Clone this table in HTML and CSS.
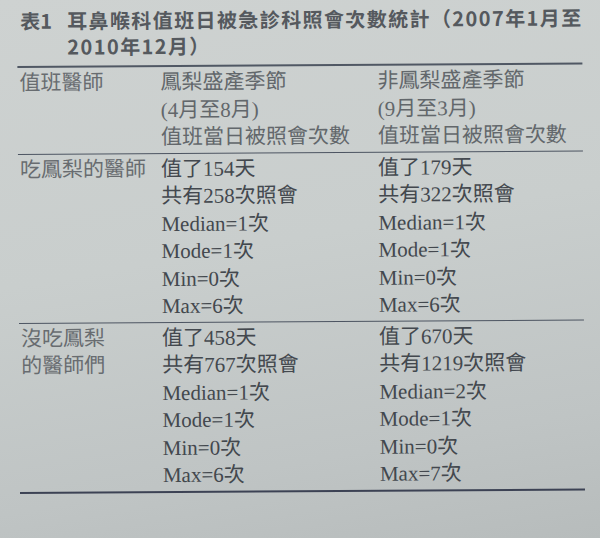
FILE: index.html
```html
<!DOCTYPE html>
<html lang="zh-Hant">
<head>
<meta charset="utf-8">
<title>表1</title>
<link rel="stylesheet" href="styles.css">
</head>
<body>
<div class="page">
  <div class="caption">
    <span class="cap-label">表1</span>
    <span class="cap-text">耳鼻喉科值班日被急診科照會次數統計（2007年1月至<br>2010年12月）</span>
  </div>
  <div class="table">
    <div class="group head">
      <div class="c1"><div>值班醫師</div></div>
      <div class="c2"><div>鳳梨盛產季節</div><div>(4月至8月)</div><div>值班當日被照會次數</div></div>
      <div class="c3"><div>非鳳梨盛產季節</div><div>(9月至3月)</div><div>值班當日被照會次數</div></div>
    </div>
    <div class="group">
      <div class="c1"><div>吃鳳梨的醫師</div></div>
      <div class="c2"><div>值了154天</div><div>共有258次照會</div><div>Median=1次</div><div>Mode=1次</div><div>Min=0次</div><div>Max=6次</div></div>
      <div class="c3"><div>值了179天</div><div>共有322次照會</div><div>Median=1次</div><div>Mode=1次</div><div>Min=0次</div><div>Max=6次</div></div>
    </div>
    <div class="group last">
      <div class="c1"><div>沒吃鳳梨</div><div>的醫師們</div></div>
      <div class="c2"><div>值了458天</div><div>共有767次照會</div><div>Median=1次</div><div>Mode=1次</div><div>Min=0次</div><div>Max=6次</div></div>
      <div class="c3"><div>值了670天</div><div>共有1219次照會</div><div>Median=2次</div><div>Mode=1次</div><div>Min=0次</div><div>Max=7次</div></div>
    </div>
  </div>
</div>
</body>
</html>
```
FILE: styles.css
```css
html, body {
  margin: 0;
  padding: 0;
}
body {
  width: 600px;
  height: 538px;
  overflow: hidden;
  background: linear-gradient(170deg, #ced2d1 0%, #c9cecd 45%, #bfc4c4 80%, #b7bcbc 100%);
}
.page {
  padding: 8px 14px 0 17px;
  transform: rotate(-0.35deg);
  transform-origin: 0 0;
}
.caption {
  display: flex;
  font-family: "Noto Sans CJK TC", "Liberation Sans", sans-serif;
  font-weight: 700;
  font-size: 20px;
  line-height: 26px;
  color: #55595e;
  padding-left: 3px;
}
.cap-label {
  width: 47px;
  flex: none;
}
.cap-text {
  letter-spacing: 1.4px;
}
.table {
  margin-top: 6px;
  width: 565px;
  border-top: 2px solid #505864;
  font-family: "Liberation Serif", "Noto Sans CJK TC", serif;
  font-size: 21px;
  line-height: 27.5px;
  color: #43484e;
}
.group {
  display: grid;
  grid-template-columns: 143px 217px 1fr;
  padding: 2px 0 1px;
  border-bottom: 1.5px solid #4d5562;
}
.group.last {
  border-bottom: 2px solid #3c4254;
}
.c1 {
  padding-left: 2px;
  color: #686c70;
}
.head .c2,
.head .c3 {
  color: #62676b;
}
```
